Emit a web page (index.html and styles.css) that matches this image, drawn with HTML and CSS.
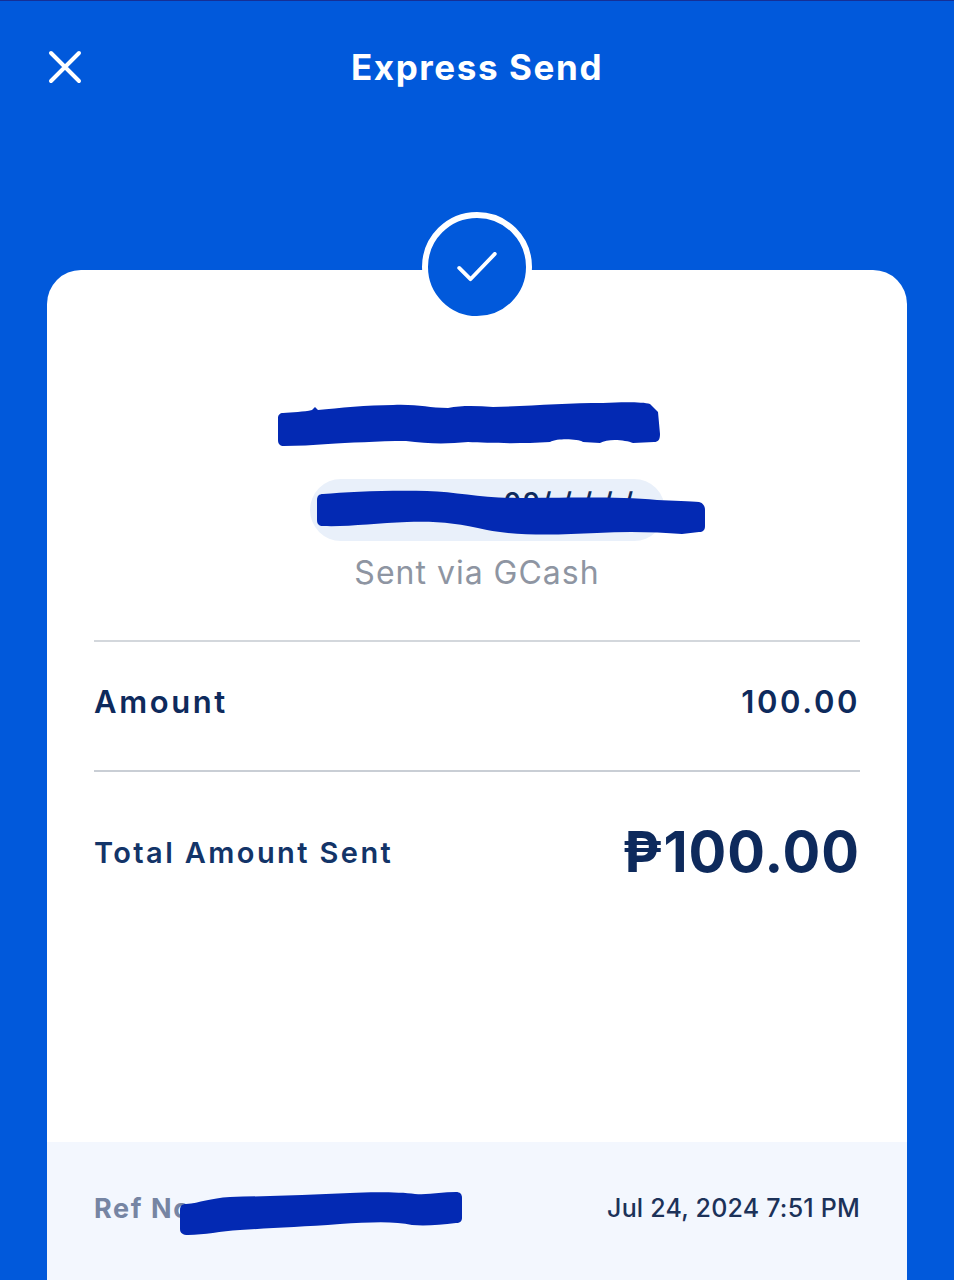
FILE: index.html
```html
<!DOCTYPE html>
<html lang="en">
<head>
    <meta charset="UTF-8">
    <meta name="viewport" content="width=device-width, initial-scale=1.0">
    <title>Express Send</title>
    <link rel="stylesheet" href="styles.css">
</head>
<body>
    <header class="top-bar">
        <svg class="close" viewBox="0 0 34 34" width="34" height="34" fill="none" stroke="#fff" stroke-width="4" stroke-linecap="round">
            <path d="M3 3L31 31M31 3L3 31"/>
        </svg>
        <h1 class="title">Express Send</h1>
    </header>

    <main class="card">
        <div class="badge">
            <svg viewBox="0 0 42 32" width="40" height="30" fill="none" stroke="#fff" stroke-width="4" stroke-linecap="round" stroke-linejoin="round">
                <path d="M2 17L14 29L40 2"/>
            </svg>
        </div>

        <section class="recipient">
            <svg class="scribble-name" viewBox="0 0 382 44" width="382" height="44">
                <path fill="#0329b3" d="M5 11C14 10 26 10 34 8L37 5L40 8C60 6 90 3 115 3C140 2 150 6 170 6C185 3 200 4 215 5C250 4 290 1 325 1C345 0 365 0 372 2L380 10L382 32C382 38 380 40 376 40L355 41C348 38 330 36 322 41L305 40C300 37 280 36 272 40C240 42 210 41 190 40C170 42 150 42 128 39C100 39 70 41 50 42C35 43 20 44 6 44C2 44 0 42 0 38L0 16C0 13 2 11 5 11Z"/>
            </svg>
            <div class="number-pill">
                <span class="number">09/ / / / /</span>
                <svg class="scribble-number" viewBox="0 0 388 46" width="388" height="46">
                    <path fill="#0329b3" d="M6 4C30 2 70 0 110 1C140 2 165 8 200 8C240 8 300 6 340 10C355 11 375 11 382 12C386 13 388 16 388 20L388 36C388 40 386 42 382 42L365 44C340 42 310 41 280 43C240 45 200 46 170 40C140 33 120 31 90 32C60 33 30 37 6 36C2 36 0 34 0 30L0 10C0 6 2 4 6 4Z"/>
                </svg>
            </div>
            <p class="via">Sent via GCash</p>
        </section>

        <section class="row row-amount">
            <span class="label">Amount</span>
            <span class="value">100.00</span>
        </section>

        <section class="row row-total">
            <span class="total-label">Total Amount Sent</span>
            <span class="total-value">₱100.00</span>
        </section>

        <footer class="card-footer">
            <div class="ref">
                <span>Ref No</span>
                <svg class="scribble-ref" viewBox="0 0 282 44" width="282" height="44">
                    <path fill="#0329b3" d="M6 12C20 11 30 6 50 5C90 4 130 3 170 1C190 0 220 0 235 2C250 3 262 0 276 0C280 0 282 2 282 6L282 26C282 29 280 31 276 31C260 33 245 34 232 33C215 29 190 30 160 32C120 35 90 36 60 38C40 39 25 43 8 43C3 43 0 41 0 37L0 18C0 14 2 12 6 12Z"/>
                </svg>
            </div>
            <span class="date">Jul 24, 2024 7:51 PM</span>
        </footer>
    </main>
</body>
</html>
```

FILE: styles.css
```css
* {
    box-sizing: border-box;
}

body {
    font-family: Inter, "Noto Sans", sans-serif;
    margin: 0;
    padding: 0;
    height: 1280px;
    overflow: hidden;
    background-color: #0159db;
    border-top: 1px solid #142f96;
    color: #0e2a5c;
}

.top-bar {
    display: flex;
    align-items: center;
    justify-content: center;
    position: relative;
    height: 132px;
    padding-bottom: 1px;
}

.close {
    position: absolute;
    left: 48px;
    top: 49px;
}

.title {
    margin: 0;
    color: #fff;
    font-size: 35px;
    font-weight: 700;
    letter-spacing: 1.6px;
}

.card {
    position: relative;
    display: flex;
    flex-direction: column;
    margin: 137px 47px 0;
    height: 1010px;
    background-color: #fff;
    border-radius: 34px 34px 0 0;
}

.badge {
    position: absolute;
    top: -58px;
    left: 375px;
    display: flex;
    align-items: center;
    justify-content: center;
    width: 110px;
    height: 110px;
    border: 6px solid #fff;
    border-radius: 50%;
    background-color: #0159db;
}

.recipient {
    display: flex;
    flex-direction: column;
    align-items: center;
    margin: 0 47px;
    padding-top: 132px;
    border-bottom: 2px solid #d3d7dc;
    height: 372px;
}

.scribble-name {
    display: block;
    margin-left: -17px;
}

.number-pill {
    position: relative;
    display: flex;
    align-items: center;
    justify-content: flex-end;
    width: 355px;
    height: 62px;
    margin-top: 33px;
    margin-left: 21px;
    padding: 0 30px 18px;
    background-color: #e9f0fa;
    border-radius: 31px;
}

.number {
    font-size: 26px;
    font-weight: 600;
    letter-spacing: 2px;
}

.scribble-number {
    position: absolute;
    left: 7px;
    top: 11px;
}

.via {
    margin: 12px 0 0;
    color: #8e95a2;
    font-size: 32px;
    letter-spacing: 1px;
    line-height: 40px;
}

.row {
    display: flex;
    align-items: center;
    justify-content: space-between;
    margin: 0 47px;
}

.row-amount {
    height: 130px;
    padding-bottom: 10px;
    border-bottom: 2px solid #c9ced5;
    font-size: 31px;
    font-weight: 600;
    letter-spacing: 2.6px;
}

.row-total {
    height: 162px;
    padding-bottom: 2px;
}

.total-label {
    font-size: 29px;
    font-weight: 600;
    letter-spacing: 2.4px;
    color: #133468;
}

.total-value {
    font-size: 56px;
    font-weight: 700;
    letter-spacing: 1px;
}

.card-footer {
    display: flex;
    align-items: center;
    justify-content: space-between;
    margin-top: auto;
    height: 138px;
    padding: 0 47px 6px;
    background-color: #f3f7fe;
}

.ref {
    position: relative;
    color: #7685a3;
    font-size: 27px;
    font-weight: 700;
    letter-spacing: 1.6px;
}

.scribble-ref {
    position: absolute;
    left: 86px;
    top: 0;
}

.date {
    font-size: 25px;
    font-weight: 500;
    letter-spacing: 0.2px;
    color: #1c3259;
}
```
